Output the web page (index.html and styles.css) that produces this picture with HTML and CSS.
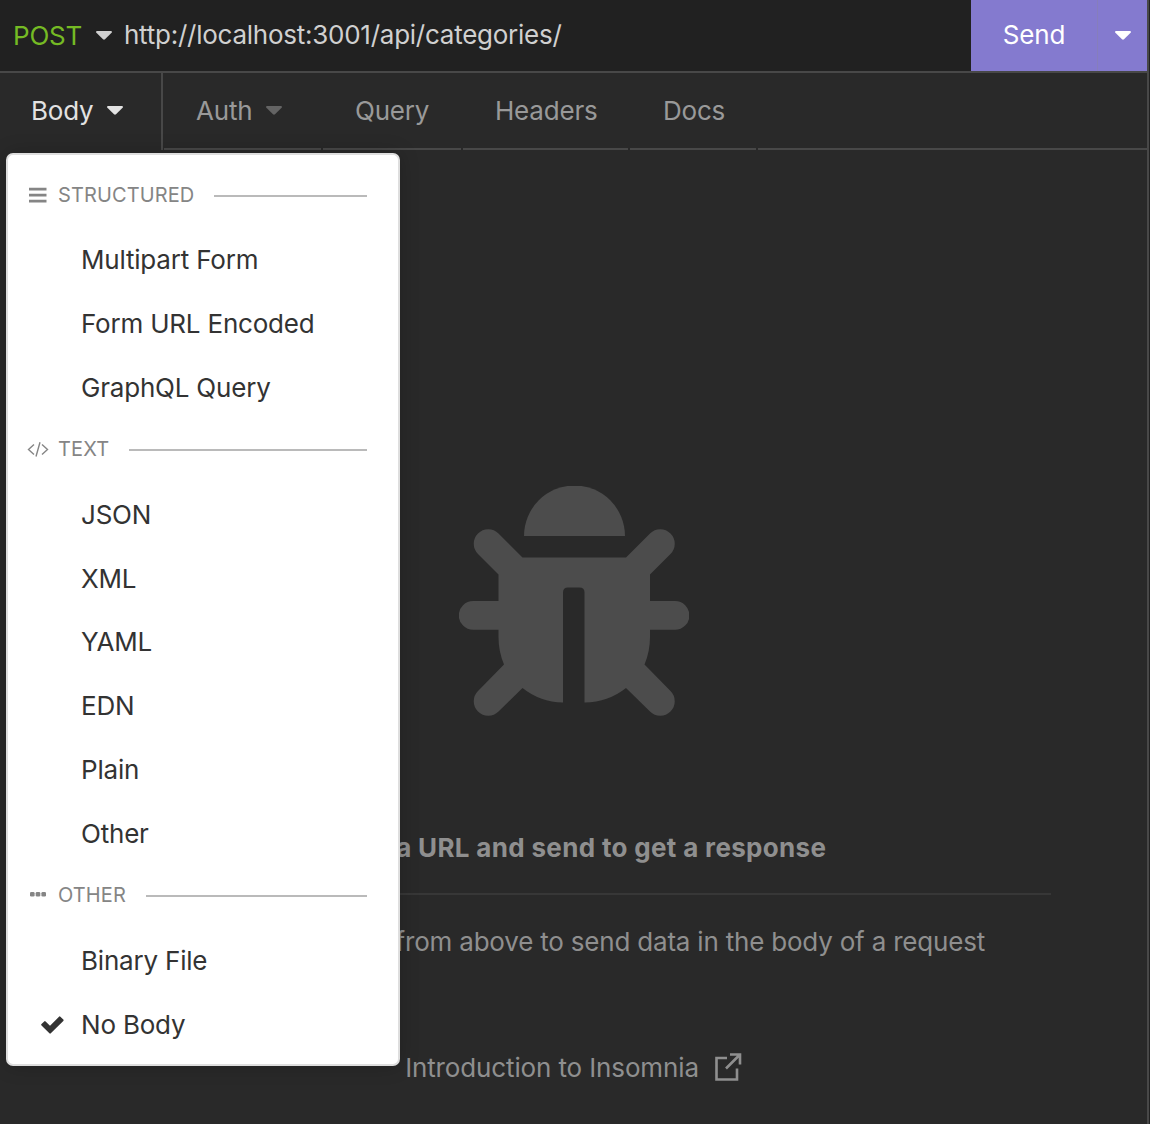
FILE: index.html
```html
<!DOCTYPE html>
<html lang="en">
<head>
<meta charset="utf-8">
<title>Insomnia</title>
<link rel="stylesheet" href="styles.css">
</head>
<body>
<div class="pane">
  <header class="urlbar">
    <button class="method">POST <svg class="caret" viewBox="0 0 16 9"><path d="M1.2 0h13.6c1 0 1.5 1.1.8 1.8L9 8.3a1.5 1.5 0 0 1-2 0L.4 1.8C-.3 1.1.2 0 1.2 0z"/></svg></button>
    <span class="url">http://localhost:3001/api/categories/</span>
    <button class="send">Send</button>
    <button class="send-more"><svg class="caret" viewBox="0 0 16 9"><path d="M1.2 0h13.6c1 0 1.5 1.1.8 1.8L9 8.3a1.5 1.5 0 0 1-2 0L.4 1.8C-.3 1.1.2 0 1.2 0z"/></svg></button>
  </header>
  <nav class="tabs">
    <div class="tab tab-body">Body <svg class="caret" viewBox="0 0 16 9"><path d="M1.2 0h13.6c1 0 1.5 1.1.8 1.8L9 8.3a1.5 1.5 0 0 1-2 0L.4 1.8C-.3 1.1.2 0 1.2 0z"/></svg></div>
    <div class="tab tab-auth">Auth <svg class="caret" viewBox="0 0 16 9"><path d="M1.2 0h13.6c1 0 1.5 1.1.8 1.8L9 8.3a1.5 1.5 0 0 1-2 0L.4 1.8C-.3 1.1.2 0 1.2 0z"/></svg></div>
    <div class="tab tab-query">Query</div>
    <div class="tab tab-headers">Headers</div>
    <div class="tab tab-docs">Docs</div>
    <div class="tab tab-rest"></div>
  </nav>
  <main class="empty">
    <svg class="bug" viewBox="0 0 230 230">
      <path d="M65 50a50.300 50.300 0 0 1 101 0z"/>
      <path d="M63.500 71.500h103.500l24-24a14.300 14.300 0 0 1 20.500 20.500l-20.500 20.500v26.500h25a14.400 14.400 0 0 1 0 28.800h-25v7.200q0 14.500-5.500 27.500l26 26.500a14.300 14.300 0 0 1-20.500 20.500l-24-23.500q-17.500 14-41.500 14.500v-110q0-5-5-5h-11.500q-5 0-5 5v110q-23-.5-40.500-14.500l-24 23.500a14.300 14.300 0 0 1-20.500-20.500l26-26.500q-5.500-13-5.500-27.500v-7.200h-25.300a14.400 14.400 0 0 1 0-28.800h25.300v-26.500l-20.500-20.500a14.300 14.300 0 0 1 20.500-20.500z"/>
    </svg>
    <p class="title">Enter a URL and send to get a response</p>
    <hr class="divider">
    <p class="hint">Select a body type from above to send data in the body of a request</p>
    <a class="docs-link">Introduction to Insomnia <svg class="external" viewBox="0 0 28 28"><path d="M13 5H2.500v21.500h20.500V15.500M16 1.500h10v10M25.500 2L12 15.500"/></svg></a>
  </main>
</div>
<div class="menu">
  <div class="group"><svg class="gicon" viewBox="0 0 22 18"><path class="stroke" stroke-width="2.800" d="M2 3.200h17.500M2 9.200h17.500M2 15.100h17.500"/></svg>STRUCTURED</div>
  <div class="item">Multipart Form</div>
  <div class="item">Form URL Encoded</div>
  <div class="item">GraphQL Query</div>
  <div class="group"><svg class="gicon" viewBox="0 0 22 18"><path class="stroke" stroke-width="1.400" d="M7 4.500L1.500 9.500L7 14.500M15 4.500L20.500 9.500L15 14.500M13 2.200L9 16.500"/></svg>TEXT</div>
  <div class="item">JSON</div>
  <div class="item">XML</div>
  <div class="item">YAML</div>
  <div class="item">EDN</div>
  <div class="item">Plain</div>
  <div class="item">Other</div>
  <div class="group"><svg class="gicon" viewBox="0 0 22 18"><rect x="3" y="6" width="4.600" height="4.600" rx="1.300"/><rect x="8.700" y="6" width="4.600" height="4.600" rx="1.300"/><rect x="14.400" y="6" width="4.600" height="4.600" rx="1.300"/></svg>OTHER</div>
  <div class="item">Binary File</div>
  <div class="item"><svg class="check" viewBox="0 0 23 18"><path d="M3.200 5.400a1 1 0 0 1 1.400 0L9 9.700L18 .7a1 1 0 0 1 1.400 0L22.300 3.600a1 1 0 0 1 0 1.400L9.800 17.300a1 1 0 0 1-1.400 0L.5 9.500a1 1 0 0 1 0-1.400z"/></svg>No Body</div>
</div>
</body>
</html>
```
FILE: styles.css
```css
* { box-sizing: border-box; }
body {
  margin: 0;
  height: 1124px;
  overflow: hidden;
  background: #222;
  color: #8f8f8f;
  font: 26px/32px Inter, sans-serif;
  letter-spacing: -0.2px;
}
button {
  border: 0;
  margin: 0;
  padding: 0;
  background: none;
  color: inherit;
  font: inherit;
  letter-spacing: inherit;
}
svg { flex: none; fill: currentColor; }
.pane {
  display: flex;
  flex-direction: column;
  width: 1149px;
  height: 1124px;
  background: #292929;
  border-right: 2px solid #484848;
}
.urlbar {
  display: flex;
  height: 73px;
  background: #212121;
  border-bottom: 2px solid #484848;
}
.caret { width: 16px; height: 9px; }
.method {
  display: flex;
  align-items: center;
  justify-content: space-between;
  width: 112px;
  padding-left: 13px;
  color: #75ba24;
}
.method .caret { color: #d0d0d0; }
.url {
  flex: 1;
  padding: 19px 0 0 12px;
  color: #d0d0d0;
  letter-spacing: -0.25px;
}
.send {
  width: 126px;
  padding-bottom: 1px;
  background: #847acf;
  color: #fff;
}
.send-more {
  display: flex;
  align-items: center;
  justify-content: center;
  width: 50px;
  background: #847acf;
  border-left: 1px solid #867ebc;
  color: #fff;
}
.tabs {
  display: flex;
  gap: 2px;
  height: 77px;
}
.tab {
  display: flex;
  align-items: center;
  gap: 14px;
  padding-left: 32px;
  border-bottom: 2px solid #484848;
  color: #999;
}
.tab-body {
  width: 163px;
  margin-right: -1px;
  padding-left: 31px;
  border-right: 2px solid #484848;
  border-bottom: 0;
  padding-bottom: 2px;
  color: #e2e2e2;
}
.tab-auth { width: 157px; }
.tab-auth .caret { color: #646464; }
.tab-query { width: 138px; }
.tab-headers { width: 165px; }
.tab-docs { width: 126px; padding-left: 33px; }
.tab-rest { flex: 1; }
.empty {
  display: flex;
  flex: 1;
  flex-direction: column;
  align-items: center;
  padding-top: 336px;
}
.bug { width: 230px; height: 230px; color: #4c4c4c; }
.title { margin: 116px 0 0; font-weight: 700; letter-spacing: 0.33px; }
.divider {
  width: 954px;
  height: 2px;
  margin: 29px 0 0;
  border: 0;
  background: #373737;
}
.hint { margin: 31px 0 0; }
.docs-link {
  display: flex;
  align-items: center;
  gap: 15px;
  margin-top: 94px;
  letter-spacing: -0.13px;
}
.external {
  width: 28px;
  height: 28px;
  margin-bottom: 2px;
  fill: none;
  stroke: currentColor;
  stroke-width: 2.6;
}
.menu {
  position: absolute;
  left: 6px;
  top: 153px;
  width: 394px;
  height: 913px;
  padding: 9.8px 31px 0 19px;
  background: #fff;
  border: 2px solid #dedede;
  border-radius: 7px;
  box-shadow: 0 0 20px rgba(0, 0, 0, .2);
  color: #333;
}
.group, .item { display: flex; align-items: center; height: 63.7px; }
.group {
  padding-bottom: 4px;
  color: #858585;
  font-size: 20px;
  letter-spacing: 0.12px;
}
.group::after {
  content: "";
  flex: 1;
  height: 2px;
  margin: 2px 0 0 20px;
  background: #bababa;
}
.gicon { width: 22px; height: 18px; margin-right: 9px; }
.stroke { fill: none; stroke: currentColor; }
.item { padding-left: 54px; }
.check { width: 23px; height: 18px; margin: 0 17px 0 -40px; }
```
